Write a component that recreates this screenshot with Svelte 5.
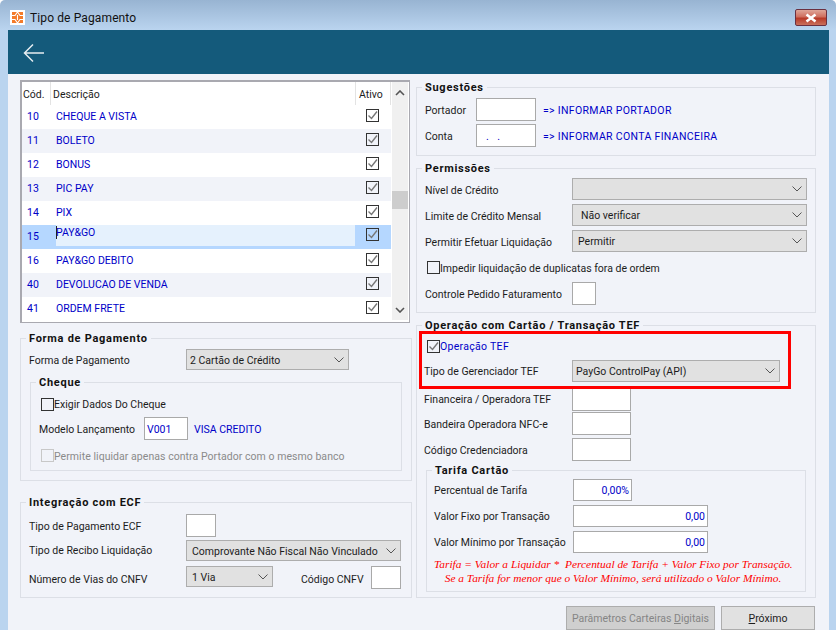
<script>
  const rows = [
    ['10', 'CHEQUE A VISTA'], ['11', 'BOLETO'], ['12', 'BONUS'], ['13', 'PIC PAY'], ['14', 'PIX'],
    ['15', 'PAY&GO'], ['16', 'PAY&GO DEBITO'], ['40', 'DEVOLUCAO DE VENDA'], ['41', 'ORDEM FRETE']
  ];
</script>

{#snippet chevron()}
  <svg class="chev" width="10" height="6" viewBox="0 0 10 6"><path d="M.5 .5 5 5 9.500 .5" fill="none" stroke="#555" stroke-width="1"/></svg>
{/snippet}
{#snippet check(on, extra = '')}
  <span class="cb {extra}">
    {#if on}<svg width="11" height="11" viewBox="0 0 11 11"><path d="M1.500 5.500 4.500 8.500 10 1.500" fill="none" stroke="#777" stroke-width="1.400"/></svg>{/if}
  </span>
{/snippet}

<div class="window">
  <div class="title">
    <svg class="logo" width="15" height="15" viewBox="0 0 15 15">
      <rect width="15" height="15" fill="#fff"/>
      <rect x="2" y="2" width="11" height="11" fill="#f47b2a"/>
      <path d="M2 5.500h3l2.500-3.500 2.500 3.500h3M2 9.500h3l2.500 3.500 2.500-3.500h3M7.500 5v5" fill="none" stroke="#fff" stroke-width="1.100"/>
    </svg>
    <span class="title-text">Tipo de Pagamento</span>
    <div class="close">
      <svg width="14" height="10" viewBox="0 0 14 10"><path d="M2.500 1.500 11.500 8.500M11.500 1.500 2.500 8.500" stroke="#fff" stroke-width="2.600"/></svg>
    </div>
  </div>
  <div class="panel">
    <div class="header">
      <svg class="back" width="22" height="20" viewBox="0 0 22 20"><path d="M21 10H2M10 1.500 1.500 10 10 18.500" fill="none" stroke="#e6edf1" stroke-width="1.500"/></svg>
    </div>
    <div class="content">
      <div class="col-left">
        <div class="table">
          <div class="grid">
            <div class="thead">
              <span class="th c1">Cód.</span><span class="th c2">Descrição</span><span class="th c3">Ativo</span>
            </div>
            {#each rows as r, i}
              <div class="tr" class:alt={i % 2 === 1} class:cur={r[0] === '15'}>
                <span class="code">{r[0]}</span>
                {#if r[0] === '15'}
                  <span class="edit"><i class="caret"></i>{r[1]}</span>
                {:else}
                  <span class="desc">{r[1]}</span>
                {/if}
                <span class="ativo">{@render check(true)}</span>
              </div>
            {/each}
          </div>
          <div class="scroll">
            <svg width="10" height="6" viewBox="0 0 10 6"><path d="M1 5 5 1 9 5" fill="none" stroke="#555" stroke-width="1.600"/></svg>
            <div class="thumb"></div>
            <svg class="down" width="10" height="6" viewBox="0 0 10 6"><path d="M1 1 5 5 9 1" fill="none" stroke="#555" stroke-width="1.600"/></svg>
          </div>
        </div>

        <fieldset class="forma">
          <legend>Forma de Pagamento</legend>
          <div class="row h21">
            <span class="lb w157">Forma de Pagamento</span>
            <div class="sel w163"><span>2 Cartão de Crédito</span>{@render chevron()}</div>
          </div>
          <fieldset class="cheque">
            <legend>Cheque</legend>
            <div class="row h24 ind2">{@render check(false)}<span class="lb up">Exigir Dados Do Cheque</span></div>
            <div class="row h23 mt1">
              <span class="lb w105">Modelo Lançamento</span>
              <div class="inp w44 blue">V001</div>
              <span class="blue ml6">VISA CREDITO</span>
            </div>
            <div class="row h14 mt8 ind2">{@render check(false, 'off')}<span class="lb dis">Permite liquidar apenas contra Portador com o mesmo banco</span></div>
          </fieldset>
        </fieldset>

        <fieldset class="ecf">
          <legend>Integração com ECF</legend>
          <div class="row h23">
            <span class="lb w157">Tipo de Pagamento ECF</span><div class="inp w30"></div>
          </div>
          <div class="row h21 mt3">
            <span class="lb w157 up">Tipo de Recibo Liquidação</span>
            <div class="sel w215"><span class="pad2">Comprovante Não Fiscal Não Vinculado</span>{@render chevron()}</div>
          </div>
          <div class="row h23 mt5 top">
            <span class="lb w157">Número de Vias do CNFV</span>
            <div class="sel w87"><span class="pad2">1 Via</span>{@render chevron()}</div>
            <span class="lb cnfv">Código CNFV</span>
            <div class="inp w30"></div>
          </div>
        </fieldset>
      </div>

      <div class="col-right">
        <fieldset class="sug">
          <legend>Sugestões</legend>
          <div class="row h23">
            <span class="lb w51">Portador</span><div class="inp w60"></div>
            <span class="blue info">=&gt; INFORMAR PORTADOR</span>
          </div>
          <div class="row h23 mt3">
            <span class="lb w51">Conta</span><div class="inp w60 blue dots">. .</div>
            <span class="blue info">=&gt; INFORMAR CONTA FINANCEIRA</span>
          </div>
        </fieldset>

        <fieldset class="perm">
          <legend>Permissões</legend>
          <div class="row h22"><span class="lb w147">Nível de Crédito</span><div class="sel w235"><span></span>{@render chevron()}</div></div>
          <div class="row h22 mt4"><span class="lb w147">Limite de Crédito Mensal</span><div class="sel w235"><span class="pad3 up">Não verificar</span>{@render chevron()}</div></div>
          <div class="row h22 mt4"><span class="lb w147">Permitir Efetuar Liquidação</span><div class="sel w235"><span class="pad1 up">Permitir</span>{@render chevron()}</div></div>
          <div class="row h22 mt4 ind2">{@render check(false)}<span class="lb">Impedir liquidação de duplicatas fora de ordem</span></div>
          <div class="row h23 mt4"><span class="lb w147">Controle Pedido Faturamento</span><div class="inp w24"></div></div>
        </fieldset>

        <fieldset class="tef">
          <legend>Operação com Cartão / Transação TEF</legend>
          <div class="row h18 ind2b">{@render check(true)}<span class="blue up wide">Operação TEF</span></div>
          <div class="row h22 mt5 tight"><span class="lb w148 up">Tipo de Gerenciador TEF</span><div class="sel w208"><span class="up">PayGo ControlPay (API)</span>{@render chevron()}</div></div>
          <div class="row h23 mt6 tight"><span class="lb w148 up">Financeira / Operadora TEF</span><div class="inp w59"></div></div>
          <div class="row h23 mt1 tight"><span class="lb w148">Bandeira Operadora NFC-e</span><div class="inp w59"></div></div>
          <div class="row h23 mt3 tight"><span class="lb w148">Código Credenciadora</span><div class="inp w59"></div></div>
          <fieldset class="tarifa">
            <legend>Tarifa Cartão</legend>
            <div class="row h22"><span class="lb w139 up">Percentual de Tarifa</span><div class="inp w59 blue right">0,00%</div></div>
            <div class="row h22 mt4"><span class="lb w139 up">Valor Fixo por Transação</span><div class="inp w135 blue right">0,00</div></div>
            <div class="row h22 mt4"><span class="lb w139 up">Valor Mínimo por Transação</span><div class="inp w135 blue right">0,00</div></div>
            <p class="note">Tarifa = Valor a Liquidar *&nbsp; Percentual de Tarifa + Valor Fixo por Transação.<br/>Se a Tarifa for menor que o Valor Mínimo, será utilizado o Valor Mínimo.</p>
          </fieldset>
          <div class="redbox"></div>
        </fieldset>
      </div>
    </div>
    <div class="footer">
      <div class="btn disabled">Parâmetros Carteiras <u>D</u>igitais</div>
      <div class="btn next"><u>P</u>róximo</div>
    </div>
  </div>
</div>

<style>
  :global(body) { margin: 0; background: #fff; }
  .window {
    width: 836px; height: 630px; box-sizing: border-box; overflow: hidden;
    padding: 0 7px 0 8px; border-radius: 5px 5px 0 0;
    background: linear-gradient(#98b4d2, #bad4ef 30px);
    font-family: Roboto, sans-serif; font-size: 10.5px; color: #1c1c1c;
  }
  .title { height: 30px; display: flex; align-items: center; padding-left: 2px; }
  .logo { margin-top: 5px; }
  .title-text { margin-left: 5px; margin-top: 6px; font-size: 12px; letter-spacing: .12px; color: #111; }
  .close {
    margin-left: auto; margin-right: 2px; margin-top: 5px; width: 32px; height: 17px; box-sizing: border-box;
    border: 1px solid #6b3040; border-radius: 2px; display: flex; align-items: center; justify-content: center;
    background: linear-gradient(#dfa598, #cf6f5f 45%, #b83a28 55%, #c9705c);
  }
  .panel { height: 600px; background: #f1f3f9; }
  .header { height: 44px; background: #145a7b; display: flex; align-items: center; padding-left: 15px; box-sizing: border-box; }
  .back { margin-top: 1px; }
  .content { display: flex; padding-left: 12px; gap: 4px; }
  .col-left { width: 392px; padding-top: 6px; }
  .col-right { width: 400px; padding-top: 6px; }

  .table {
    width: 390px; height: 243px; box-sizing: border-box; border: 2px solid #a9a9b0; border-right-width: 1px; border-bottom-width: 1px;
    background: #fff; display: flex;
  }
  .grid { width: 369px; }
  .thead { height: 23px; display: flex; }
  .th { height: 23px; line-height: 25px; box-sizing: border-box; border-right: 1px solid #e3e3e3; padding-left: 1px; }
  .c1 { width: 29px; }
  .c2 { width: 305px; padding-left: 2px; }
  .c3 { width: 35px; padding-left: 3px; }
  .tr { height: 24px; display: flex; align-items: center; color: #0000c8; }
  .tr.alt { background: #f1f3f9; }
  .tr.cur { background: #b5d7ff; align-items: flex-start; }
  .code { width: 34px; padding-left: 5px; padding-bottom: 2px; box-sizing: border-box; }
  .tr.cur .code { line-height: 24px; padding-bottom: 0; }
  .desc { width: 300px; padding-bottom: 2px; }
  .edit {
    width: 299px; height: 21px; margin-right: 1px; background: #e5f1fd; line-height: 15px; position: relative; color: #0000c8;
  }
  .caret { position: absolute; left: 0; top: 1px; width: 1px; height: 13px; background: #222; }
  .ativo { margin-left: 10px; margin-top: -3px; display: flex; }
  .tr.cur .ativo { margin-top: 3px; }
  .scroll { width: 16px; height: 238px; margin-left: 1px; background: #f0f0f0; position: relative; text-align: center; }
  .scroll svg { position: absolute; left: 3px; top: 8px; }
  .scroll svg.down { top: auto; bottom: 7px; }
  .thumb { position: absolute; top: 109px; left: 0; width: 16px; height: 18px; background: #cdcdcd; }

  fieldset { margin: 0; min-width: 0; border: 1px solid #dcdfe6; padding: 0 8px; }
  legend { font-size: 11px; font-weight: 700; letter-spacing: .72px; line-height: 13px; padding: 1px 3px 0; margin-left: -3px; color: #111; }
  .row { display: flex; align-items: center; }
  .row > span.lb, .row > span.blue, .sel > span { padding-top: 2px; }
  .row > span.up, .sel > span.up { padding-top: 0; }
  .top { align-items: flex-start; }
  .top .lb { line-height: 23px; padding-top: 0; }
  .h14 { height: 14px; } .h18 { height: 18px; } .h21 { height: 21px; } .h22 { height: 22px; } .h23 { height: 23px; } .h24 { height: 24px; }
  .mt1 { margin-top: 1px; } .mt3 { margin-top: 3px; } .mt4 { margin-top: 4px; } .mt5 { margin-top: 5px; } .mt6 { margin-top: 6px; } .mt8 { margin-top: 8px; }
  .ml6 { margin-left: 6px; }
  .info { margin-left: 7px; letter-spacing: .33px; }
  .wide { letter-spacing: .3px; }
  .lb { white-space: nowrap; }
  .dis { color: #8a8a8a; letter-spacing: .05px; }
  .blue { color: #0000c8; }
  .w51 { width: 51px; } .w105 { width: 105px; } .w139 { width: 139px; } .w147 { width: 147px; } .w148 { width: 148px; } .w157 { width: 157px; }
  .ind2 { padding-left: 2px; } .ind2b { padding-left: 2px; }
  .tight { margin-left: -1px; }

  .inp {
    height: 100%; box-sizing: border-box; background: #fff; border: 1px solid #a9a9a9; line-height: 21px; padding: 1px 2px 0;
  }
  .right { text-align: right; padding-right: 2px; padding-top: 0; }
  .dots { padding-left: 9px; letter-spacing: 3px; }
  .w24 { width: 24px; } .w30 { width: 30px; } .w44 { width: 44px; } .w59 { width: 59px; } .w60 { width: 60px; } .w135 { width: 135px; }
  .sel {
    height: 100%; box-sizing: border-box; background: #e1e1e1; border: 1px solid #adadad; display: flex; align-items: center;
    justify-content: space-between; padding: 0 4px 0 3px; white-space: nowrap;
  }
  .top .sel { height: 21px; }
  .pad1 { padding-left: 2px; } .pad2 { padding-left: 2px; } .pad3 { padding-left: 5px; }
  .w87 { width: 87px; } .w163 { width: 163px; } .w208 { width: 208px; } .w215 { width: 215px; } .w235 { width: 235px; }
  .cnfv { margin-left: 28px; width: 70px; }

  .cb {
    width: 13px; height: 13px; box-sizing: border-box; border: 1px solid #333; background: transparent; display: inline-block; flex: none; position: relative;
  }
  .cb svg { position: absolute; left: 0; top: 0; }
  .cb.off { border-color: #c8c8c8; }

  .forma { margin-top: 8px; padding-top: 4px; padding-bottom: 9px; }
  .cheque { margin-top: 5px; margin-left: 1px; margin-right: 1px; padding-top: 3px; padding-bottom: 8px; }
  .ecf { margin-top: 14px; padding-top: 5px; padding-bottom: 8px; }
  .sug { padding-top: 4px; padding-bottom: 8px; }
  .perm { margin-top: 5px; padding-top: 3px; padding-bottom: 7px; }
  .tef { margin-top: 5px; padding-top: 5px; padding-bottom: 5px; position: relative; }
  .tarifa { margin: 2px 1px 0 1px; padding: 2px 7px 6px; }
  .tarifa legend { margin-left: -2px; }
  .note {
    margin: 4px 6px 0 0; text-align: center; color: #f00; font-family: "Liberation Serif", serif; font-style: italic; font-size: 11.4px; line-height: 14px; white-space: nowrap;
  }
  .redbox { position: absolute; left: 2px; top: -1px; width: 372px; height: 58px; box-sizing: border-box; border: 3px solid #f00; background: transparent; pointer-events: none; }

  .footer { display: flex; justify-content: flex-end; gap: 6px; padding: 8px 14px 0 0; }
  .btn { height: 24px; box-sizing: border-box; border: 1px solid #adadad; background: #e1e1e1; text-align: center; line-height: 24px; white-space: nowrap; }
  .disabled { width: 149px; background: #cfcfcf; color: #858585; }
  .next { width: 94px; }
</style>
